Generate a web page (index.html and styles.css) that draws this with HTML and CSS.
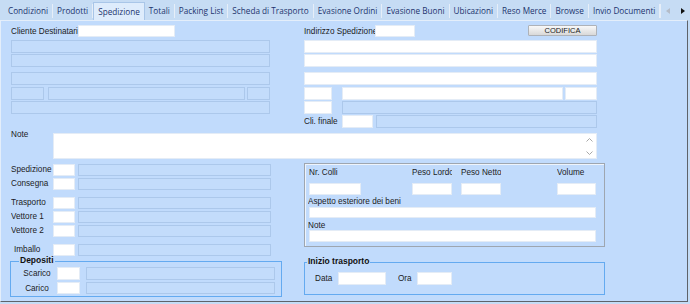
FILE: index.html
```html
<!DOCTYPE html>
<html lang="it">
<head>
  <meta charset="UTF-8">
  <title>Spedizione</title>
  <link rel="stylesheet" href="styles.css">
</head>
<body>

  <div class="tabs">
    <span class="tab">Condizioni</span>
    <span class="tab">Prodotti</span>
    <span class="tab on">Spedizione</span>
    <span class="tab">Totali</span>
    <span class="tab">Packing List</span>
    <span class="tab">Scheda di Trasporto</span>
    <span class="tab">Evasione Ordini</span>
    <span class="tab">Evasione Buoni</span>
    <span class="tab">Ubicazioni</span>
    <span class="tab">Reso Merce</span>
    <span class="tab">Browse</span>
    <span class="tab">Invio Documenti</span>
    <span class="tab-arrows">
      <svg width="4" height="6" viewBox="0 0 4 6"><polygon points="4,0 4,6 0,3" fill="#b4bcc8"/></svg>
      <svg width="4" height="6" viewBox="0 0 4 6"><polygon points="0,0 0,6 4,3" fill="#111"/></svg>
    </span>
  </div>

  <div class="panel">
    <div class="top">
      <div class="col-l">
        <div class="row">
          <span class="lbl w-cliente">Cliente Destinatario</span>
          <span class="in h12 w-cod"></span>
        </div>
        <div class="row m1"><span class="off full-l"></span></div>
        <div class="row"><span class="off full-l"></span></div>
        <div class="row m4"><span class="off full-l"></span></div>
        <div class="row m1">
          <span class="off w-cap"></span>
          <span class="off w-city"></span>
          <span class="off w-prov"></span>
        </div>
        <div class="row"><span class="off full-l"></span></div>
      </div>

      <div class="col-r">
        <div class="row">
          <span class="lbl w-indir">Indirizzo Spedizione</span>
          <span class="in h12 w-indcod"></span>
          <span class="btn">CODIFICA</span>
        </div>
        <div class="row m1"><span class="in full-r"></span></div>
        <div class="row"><span class="in full-r"></span></div>
        <div class="row m4"><span class="in full-r"></span></div>
        <div class="row m1">
          <span class="in w-rcap"></span>
          <span class="in w-rcity"></span>
          <span class="in w-rprov"></span>
        </div>
        <div class="row">
          <span class="in w-rcap"></span>
          <span class="off w-rnaz"></span>
        </div>
        <div class="row">
          <span class="lbl w-clif">Cli. finale</span>
          <span class="in w-clicod"></span>
          <span class="off w-clides"></span>
        </div>
      </div>
    </div>

    <div class="note-row">
      <span class="lbl note-lbl">Note</span>
      <div class="memo">
        <div class="memo-scroll">
          <svg width="7" height="4" viewBox="0 0 7 4"><polyline points="0.5,3.5 3.5,0.5 6.5,3.5" fill="none" stroke="#a8a8a8"/></svg>
          <svg width="7" height="4" viewBox="0 0 7 4"><polyline points="0.5,0.5 3.5,3.5 6.5,0.5" fill="none" stroke="#a8a8a8"/></svg>
        </div>
      </div>
    </div>

    <div class="bottom">
      <div class="col-bl">
        <div class="brow m1">
          <span class="lbl w-blbl">Spedizione</span>
          <span class="in h12 w-bcod"></span>
          <span class="off h12 w-bdes"></span>
        </div>
        <div class="brow">
          <span class="lbl w-blbl">Consegna</span>
          <span class="in h12 w-bcod"></span>
          <span class="off h12 w-bdes"></span>
        </div>
        <div class="brow m5">
          <span class="lbl w-blbl">Trasporto</span>
          <span class="in h12 w-bcod"></span>
          <span class="off h12 w-bdes"></span>
        </div>
        <div class="brow">
          <span class="lbl w-blbl">Vettore 1</span>
          <span class="in h12 w-bcod"></span>
          <span class="off h12 w-bdes"></span>
        </div>
        <div class="brow">
          <span class="lbl w-blbl">Vettore 2</span>
          <span class="in h12 w-bcod"></span>
          <span class="off h12 w-bdes"></span>
        </div>
        <div class="brow m5">
          <span class="lbl w-blbl indent">Imballo</span>
          <span class="in h12 w-bcod"></span>
          <span class="off h12 w-bdes"></span>
        </div>

        <div class="group depositi">
          <span class="legend">Depositi</span>
          <div class="grow">
            <span class="lbl w-dlbl">Scarico</span>
            <span class="in w-dcod"></span>
            <span class="off w-ddes"></span>
          </div>
          <div class="grow">
            <span class="lbl w-dlbl">Carico</span>
            <span class="in h12 w-dcod"></span>
            <span class="off h12 w-ddes"></span>
          </div>
        </div>
      </div>

      <div class="col-br">
        <div class="box">
          <div class="colli">
            <div class="cfield c1">
              <span class="lbl clbl">Nr. Colli</span>
              <span class="in h12"></span>
            </div>
            <div class="cfield c2">
              <span class="lbl clbl">Peso Lordo</span>
              <span class="in h12"></span>
            </div>
            <div class="cfield c3">
              <span class="lbl clbl">Peso Netto</span>
              <span class="in h12"></span>
            </div>
            <div class="cfield c4">
              <span class="lbl clbl">Volume</span>
              <span class="in h12"></span>
            </div>
          </div>
          <span class="lbl small-lbl w-aspetto">Aspetto esteriore dei beni</span>
          <span class="in h11 full-box first-box"></span>
          <span class="lbl small-lbl note2">Note</span>
          <span class="in h12 full-box"></span>
        </div>

        <div class="group inizio">
          <span class="legend">Inizio trasporto</span>
          <div class="irow">
            <span class="lbl w-data">Data</span>
            <span class="in w-idata"></span>
            <span class="lbl w-ora">Ora</span>
            <span class="in w-iora"></span>
          </div>
        </div>
      </div>
    </div>
  </div>

</body>
</html>
```

FILE: styles.css
```css
* {
  box-sizing: border-box;
}

body {
  margin: 0;
  width: 690px;
  height: 304px;
  overflow: hidden;
  background: #c4dcf6;
  font-family: "Liberation Sans", Arial, sans-serif;
  font-size: 8.2px;
  color: #1c1c1c;
}

/* tab strip */
.tabs {
  display: flex;
  height: 20px;
  padding-left: 4px;
  font-family: "Open Sans", "Noto Sans", sans-serif;
  font-size: 8.2px;
  color: #22346e;
  background: #c6dcf4;
}

.tab {
  margin: 4px 0 2px;
  height: 14px;
  line-height: 14px;
  padding: 0 4px;
  border-right: 1px solid #e6eef8;
  white-space: nowrap;
}

.tab.on {
  margin-top: 2px;
  margin-bottom: 0;
  height: 18px;
  padding-top: 2px;
  background: #deecfc;
  border: 1px solid #a9c6e8;
  border-bottom: none;
}

.tab-arrows {
  margin-left: auto;
  width: 32px;
  display: flex;
  align-items: center;
  gap: 11px;
  padding-left: 5px;
  border-left: 1px solid #e6eef8;
  margin-top: 4px;
  margin-bottom: 2px;
}

/* page panel */
.panel {
  width: 688px;
  height: 282px;
  background: #c1dbfc;
  border-top: 1px solid #e4eefa;
  border-left: 1px solid #e4eefa;
  border-right: 1px solid #5e636a;
  border-bottom: 1px solid #5e636a;
  padding: 4px 0 0 10px;
}

.top {
  display: flex;
  gap: 34px;
}

.col-l {
  width: 259px;
}

.col-r {
  width: 293px;
}

.row {
  display: flex;
  height: 14px;
  align-items: flex-start;
}

.m1 { margin-top: 1px; }
.m4 { margin-top: 4px; }
.m5 { margin-top: 5px; }

.lbl {
  display: block;
  line-height: 13px;
  white-space: nowrap;
  overflow: hidden;
  flex-shrink: 0;
}

.in, .off {
  display: block;
  height: 13px;
  flex-shrink: 0;
}

.in {
  background: #fff;
  border: 1px solid #e4ecf6;
}

.off {
  background: #c3dcfb;
  border: 1px solid #acc8eb;
}

.h12 { height: 12px; }
.h11 { height: 11px; }

.btn {
  margin-left: auto;
  width: 69px;
  height: 11px;
  line-height: 9px;
  text-align: center;
  font-size: 7.5px;
  color: #1a1a1a;
  background: linear-gradient(#f8f8f8, #d9d9d9);
  border: 1px solid #aeb2b8;
  border-radius: 1px;
}

/* top-left widths */
.w-cliente { width: 67px; }
.w-cod { width: 97px; }
.full-l { width: 259px; }
.w-cap { width: 33px; }
.w-city { width: 197px; margin-left: 4px; }
.w-prov { width: 23px; margin-left: 2px; }

/* top-right widths */
.w-indir { width: 71px; }
.w-indcod { width: 40px; }
.full-r { width: 293px; }
.w-rcap { width: 28px; }
.w-rcity { width: 221px; margin-left: 10px; }
.w-rprov { width: 32px; margin-left: 2px; }
.w-rnaz { width: 255px; margin-left: 10px; }
.w-clif { width: 38px; }
.w-clicod { width: 31px; }
.w-clides { width: 221px; margin-left: 3px; }

/* note */
.note-row {
  display: flex;
  margin-top: 4px;
}

.note-lbl {
  width: 42px;
  line-height: 8px;
  margin-top: -2px;
}

.memo {
  width: 544px;
  height: 26px;
  background: #fff;
  border: 1px solid #e4ecf6;
  display: flex;
  justify-content: flex-end;
}

.memo-scroll {
  width: 13px;
  display: flex;
  flex-direction: column;
  justify-content: space-between;
  align-items: center;
  padding: 4px 0 3px;
}

.memo-scroll svg {
  display: block;
}

/* bottom area */
.bottom {
  display: flex;
  margin-top: 4px;
  gap: 22px;
}

.col-bl {
  width: 271px;
}

.col-br {
  width: 301px;
}

.brow {
  display: flex;
  height: 14px;
  align-items: flex-start;
}

.brow .lbl {
  line-height: 12px;
}

.w-blbl { width: 42px; }
.indent { padding-left: 3px; }
.w-bcod { width: 22px; }
.w-bdes { width: 193px; margin-left: 3px; }

/* blue group boxes */
.group {
  border: 1px solid #64aaf0;
}

.legend {
  display: block;
  width: max-content;
  margin: -6px 0 0 2px;
  padding: 0 1px;
  line-height: 9px;
  font-weight: bold;
  font-size: 8.5px;
  color: #111;
  background: #c1dbfc;
}

.depositi {
  width: 272px;
  margin: 3px 0 0 -1px;
  padding: 0 0 1px 6px;
}

.grow {
  display: flex;
  margin-top: 2px;
}

.w-dlbl { width: 40px; text-align: center; }
.w-dcod { width: 23px; }
.w-ddes { width: 189px; margin-left: 6px; }

/* etched box */
.box {
  width: 301px;
  border: 1px solid #9ea6b0;
  box-shadow: inset 1px 1px 0 #eef4fc;
  padding: 3px 0 4px 4px;
  display: flex;
  flex-direction: column;
}

.colli {
  display: flex;
}

.cfield {
  display: flex;
  flex-direction: column;
}

.clbl {
  line-height: 12px;
  margin-bottom: 4px;
}

.c1 { width: 52px; }
.c2 { width: 40px; margin-left: 51px; }
.c3 { width: 40px; margin-left: 9px; }
.c4 { width: 39px; margin-left: 56px; }

.small-lbl {
  line-height: 9px;
}

.w-aspetto {
  width: 95px;
  margin-top: 2px;
  margin-left: -1px;
}

.note2 {
  margin-top: 3px;
  margin-left: -1px;
}

.full-box { width: 287px; }
.first-box { margin-top: 1px; }

.inizio {
  width: 301px;
  margin-top: 15px;
  padding-bottom: 9px;
}

.irow {
  display: flex;
  margin-top: 6px;
  padding-left: 10px;
}

.w-data { width: 23px; }
.w-idata { width: 48px; }
.w-ora { width: 19px; margin-left: 12px; }
.w-iora { width: 35px; }
```
